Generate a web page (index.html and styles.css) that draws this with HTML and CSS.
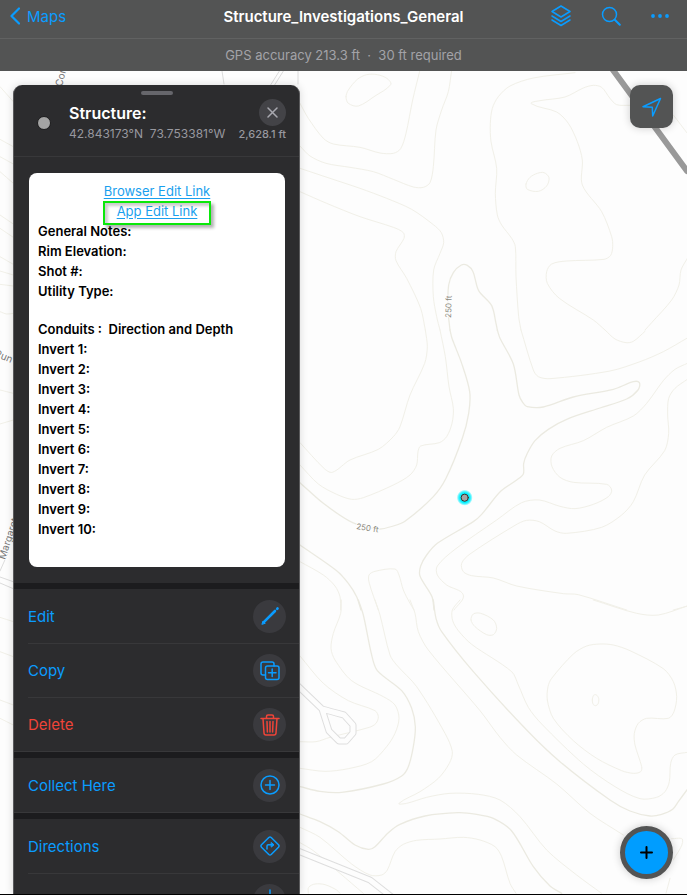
FILE: index.html
```html
<!DOCTYPE html>
<html lang="en">
<head>
<meta charset="utf-8">
<meta name="viewport" content="width=device-width, initial-scale=1">
<title>Structure_Investigations_General</title>
<link rel="stylesheet" href="styles.css">
</head>
<body>
<div class="app">
  <header class="topbar">
    <div class="nav">
      <a class="back" href="#">
        <svg width="10" height="18" viewBox="0 0 10 18"><path d="M9 1.500 1.500 9 9 16.500"/></svg>
        Maps
      </a>
      <h1 class="title">Structure_Investigations_General</h1>
      <div class="tools">
        <button class="tool" type="button" aria-label="Layers">
          <svg width="20" height="22" viewBox="1 0 20 22"><path d="M11 1 20 6.500 11 12 2 6.500ZM2 11 11 16.500 20 11M2 15 11 20.500 20 15"/></svg>
        </button>
        <button class="tool" type="button" aria-label="Search">
          <svg width="20" height="20" viewBox="0 0 20 20"><circle cx="8.500" cy="8.500" r="7"/><path class="handle" d="m13.800 13.800 5 5"/></svg>
        </button>
        <button class="tool" type="button" aria-label="More">
          <svg class="solid" width="18" height="4" viewBox="0 0 18 4"><circle cx="2" cy="2" r="1.900"/><circle cx="9" cy="2" r="1.900"/><circle cx="16" cy="2" r="1.900"/></svg>
        </button>
      </div>
    </div>
    <p class="gps">GPS accuracy 213.3 ft &nbsp;·&nbsp; 30 ft required</p>
  </header>

  <main class="stage">
    <svg class="map" viewBox="0 71 687 824" preserveAspectRatio="xMinYMin slice" aria-hidden="true">
      <defs>
        <radialGradient id="halo"><stop offset="0.600" stop-color="#00f0ff"/><stop offset="0.750" stop-color="#22f2ff" stop-opacity="0.850"/><stop offset="1" stop-color="#00f0ff" stop-opacity="0"/></radialGradient>
      </defs>
      <g id="contours"></g>
      <path class="highway" d="M613 70 687 171"/>
      <g class="road">
        <path class="casing" d="M298 686 322 709Q329 711 344 715L353 725V733L346 741H339L329 731 322 709M298 851 370 880 398 902"/>
        <path class="fill" d="M298 686 322 709Q329 711 344 715L353 725V733L346 741H339L329 731 322 709M298 851 370 880 398 902"/>
      </g>
      <path class="lane" d="M270 86 280 70M274 86 284 70M222 71 224 84M298 71 298 84M0 577 14 582M0 583 14 589M0 571 8 553"/>
      <g class="labels">
        <text transform="translate(451 318)rotate(-88)">250 ft</text>
        <text transform="translate(356 529)rotate(9)">250 ft</text>
        <text class="street" transform="translate(62 87)rotate(-76)">Corp</text>
        <text class="street" transform="translate(-6 356)rotate(22)">Run</text>
        <text class="street" transform="translate(5 560)rotate(-72)">Margaret</text>
      </g>
      <circle cx="464.700" cy="497.700" r="8" fill="url(#halo)" stroke="none"/>
      <circle class="point" cx="464.700" cy="497.700" r="3.600"/>
    </svg>

    <section class="panel">
      <div class="grabber"></div>
      <div class="summary">
        <span class="marker"></span>
        <h2 class="name">Structure:</h2>
        <button class="close" type="button" aria-label="Close">
          <svg width="11" height="11" viewBox="0 0 11 11"><path d="m1 1 9 9M10 1 1 10"/></svg>
        </button>
        <p class="position"><span>42.843173°N&nbsp; 73.753381°W</span><span class="distance">2,628.1 ft</span></p>
      </div>

      <div class="details">
        <div class="card">
          <div class="links">
            <a href="#">Browser Edit Link</a>
            <a class="marked" href="#">App Edit Link</a>
          </div>
          <ul class="fields">
            <li>General Notes:</li>
            <li>Rim Elevation:</li>
            <li>Shot #:</li>
            <li>Utility Type:</li>
          </ul>
          <ul class="fields">
            <li>Conduits :&nbsp; Direction and Depth</li>
            <li>Invert 1:</li>
            <li>Invert 2:</li>
            <li>Invert 3:</li>
            <li>Invert 4:</li>
            <li>Invert 5:</li>
            <li>Invert 6:</li>
            <li>Invert 7:</li>
            <li>Invert 8:</li>
            <li>Invert 9:</li>
            <li>Invert 10:</li>
          </ul>
        </div>
      </div>

      <div class="group">
        <button class="action" type="button">Edit
          <span class="badge"><svg width="20" height="20" viewBox="0 0 20 20"><path class="pencil" d="M3.800 16.200 15 5M17.200 2.800l.3-.3"/><path class="tip" d="m2 18 1-3 2 2Z"/></svg></span>
        </button>
        <button class="action" type="button">Copy
          <span class="badge"><svg width="20" height="20" viewBox="0 0 20 20"><path d="M5.500 14H3Q1 14 1 12V3Q1 1 3 1H12Q14 1 14 3V5"/><rect x="5.500" y="5" width="13.500" height="13.500" rx="2"/><path d="M12.200 8V15.500M8.500 11.800H16"/></svg></span>
        </button>
        <button class="action danger" type="button">Delete
          <span class="badge"><svg width="20" height="22" viewBox="0 0 20 22"><path d="M1 4.500H19M6.500 4.500V2.500Q6.500 1 8 1H12Q13.500 1 13.500 2.500V4.500M3 4.500 4 19Q4.100 21 6 21H14Q15.900 21 16 19L17 4.500M7 7.500 7.400 18M10 7.500V18M13 7.500 12.600 18"/></svg></span>
        </button>
      </div>
      <div class="group">
        <button class="action" type="button">Collect Here
          <span class="badge"><svg width="20" height="20" viewBox="0 0 20 20"><circle cx="10" cy="10" r="9"/><path d="M10 5.500V14.500M5.500 10H14.500"/></svg></span>
        </button>
      </div>
      <div class="group">
        <button class="action" type="button">Directions
          <span class="badge"><svg width="20" height="20" viewBox="0 0 20 20"><path d="M8.800 1.500Q10 .4 11.200 1.500L18.500 8.800Q19.600 10 18.500 11.200L11.200 18.500Q10 19.600 8.800 18.500L1.500 11.200Q.4 10 1.500 8.800Z"/><path d="M7 13V10Q7 8.800 8.200 8.800H13"/><path class="tip" d="M11.500 6.700 14 8.800 11.500 10.900Z"/></svg></span>
        </button>
        <button class="action" type="button" aria-label="Compass">
          <span class="badge"><svg width="22" height="24" viewBox="0 0 22 24"><circle cx="11" cy="13" r="7"/><path d="M11 1V9M11 17V23M1 13H7M15 13H21"/></svg></span>
        </button>
      </div>
    </section>

    <div class="controls">
      <button class="locate" type="button" aria-label="My location">
        <svg width="20" height="20" viewBox="0 0 20 20"><path d="M18.500 1.500 1 9.700 10.300 10.200 10.700 19Z"/></svg>
      </button>
      <button class="add" type="button" aria-label="Add">
        <svg width="13" height="13" viewBox="0 0 13 13"><path d="M6.500 1V12M1 6.500H12"/></svg>
      </button>
    </div>
  </main>
</div>
<script src="contours.js"></script>
</body>
</html>
```
FILE: contours.js
```js
// Elevation contours by map tile. Tile coordinates are three units per pixel.
// A line that starts with "!" is an index contour, "o" closes the loop.
const tiles = [
  { x: 300, y: 70, lines: [
    "o 138,80 145,60 172,28 200,14 232,14 262,26 272,44 225,78 175,108 145,100",
    "0,100 25,145 70,205 100,222 180,232 240,249 280,250 302,236 318,190 338,90 360,0",
    "0,228 30,258 78,280 150,292 220,305 280,328 340,351 370,352 390,338 400,290 408,180 425,120 445,65 455,0",
    "0,295 90,325 180,355 260,385 335,418 400,464 424,488 431,518 420,550 401,600 400,680 410,740 420,780",
    "0,365 80,400 180,440 280,472 310,488 312,505 288,545 288,572 320,625 362,715 376,780",
    "825,8 700,24 630,48 595,80 577,115 571,160 573,215 590,295 586,370 592,435 605,465 635,505 646,530 648,620 656,740 663,780",
    "990,106 950,104 930,85 905,52 880,46 850,54 795,81 720,92 694,101 770,126 805,160 832,215 847,270 847,345 905,425 935,500 938,530 932,556 912,568 800,573 755,582 740,605 742,640 778,685 880,750 915,780",
    "o 678,342 690,322 712,310 732,308 747,323 740,348 715,364 682,358",
    "1120,135 1162,190",
    "1162,565 1143,600 1137,645 1115,690 1055,758 1035,780",
    "! 450,780 444,720 446,645 460,608 484,585 502,586 519,605 536,662 575,707 588,760 592,780"
  ]},
  { x: 300, y: 330, lines: [
    "376,0 382,50 374,100 330,195 300,290 280,320 235,358 150,390 97,427 72,415 0,338",
    "420,0 436,80 447,170 460,235 456,280 440,320 418,338 362,348 354,365 350,405 330,435 280,465 190,503 155,508 110,493 55,462 0,405",
    "! 450,0 456,25 485,100 509,185 506,250 487,325 438,445 400,500 316,573 280,588 235,597 158,578 70,520 0,458",
    "! 592,0 600,25 640,102 657,195 668,217 682,230 730,231 820,201 940,178 1000,155 1018,158 1014,180 980,207 900,234 805,266 745,298 705,332 682,370 671,400 670,432 650,450 602,484 545,553 520,575 412,640 380,675 362,708 360,738 396,800 402,840",
    "663,0 700,120 715,140 750,146 930,123 1020,95 1090,65 1162,24",
    "915,0 945,27 978,38 1000,34 1035,4",
    "1162,100 1125,118 1090,152 1040,220 1000,258 920,292 850,332 780,355 755,378 756,410 780,442 820,457 920,463 935,480 925,500 880,523 825,536 780,529 718,510 665,518 590,570 465,658 412,708 412,735 440,765 490,795 462,840",
    "1162,148 1125,175 1106,205 1103,255 1106,310 1094,362 1034,435 1000,515 965,555 905,592 800,610 765,603 718,575 680,571 645,586 510,672 485,700 490,725 515,737 580,744 650,768 790,791 835,794 980,840",
    "! 0,645 110,722 145,760 170,800 183,840",
    "0,695 70,735 105,768 120,800 122,840",
    "235,840 208,760 207,735 225,724 285,717 297,735 310,780 330,820 342,840",
    "1120,840 1162,828"
  ]},
  { x: 300, y: 600, lines: [
    "124,0 122,40 100,100 93,145 105,180 155,242 250,290 285,315 297,355 285,400 260,440 215,485 145,506 75,514 0,505",
    "! 175,0 190,45 215,165 232,212 305,272 335,325 346,380 340,440 325,500 305,528 250,552 125,577 60,574 0,560",
    "225,0 240,45 270,165 290,195 350,260 435,400 457,455 448,490 415,535 360,575 297,610 320,610 380,592 450,580 535,583 600,600 660,650 740,750 830,825 905,880",
    "330,0 345,40 355,95 385,150 540,332 600,412 650,465 770,552 870,640 970,705",
    "! 400,0 408,55 425,95 520,215 680,390 780,485 930,600 990,633 1050,648 1085,643 1118,628 1135,605 1162,568",
    "480,0 457,30 458,62 475,92 515,133 635,215 655,255 685,322 725,372 850,492 945,560 1020,596 1070,592 1095,575 1108,545 1112,490 1125,465 1162,457",
    "o 513,60 520,42 542,40 580,60 590,85 580,104 560,104 525,80",
    "880,0 1010,40 1075,45 1162,18",
    "o 742,300 744,260 755,235 820,162 860,138 900,132 940,135 990,152 1090,206 1120,245 1130,290 1122,335 1105,355 1040,355 1015,370 1003,400 1005,435 1025,500 1022,515 1000,520 965,512 890,475 820,422 760,355",
    "o 877,300 880,287 888,284 896,295 894,312 886,317 879,312",
    "0,168 70,250 145,302 225,332 235,350 228,370 208,382 90,412 48,425 0,425",
    "! 0,642 60,665 115,695 165,735 205,748 225,740 265,698 300,673 375,648 475,638 530,643 580,655 635,693 700,800 750,858 785,880",
    "0,682 60,712 155,792 210,825 245,825 262,810 285,755 310,733 350,721 420,717 490,712 540,720 585,740 605,770 630,850 648,880",
    "0,728 40,752 120,820 190,880",
    "25,880 26,862 45,852 75,854 110,870 120,880",
    "1115,716 1148,720 1120,780",
    "1110,835 1098,880"
  ]},
  { x: 0, y: 60, lines: [
    "0,80 40,125", "0,238 40,260", "0,290 40,312", "0,335 40,370", "0,465 40,492",
    "0,505 40,532", "0,590 40,613", "0,633 40,645", "0,673 40,678", "0,755 20,762 40,760",
    "0,990 40,1000", "0,1092 40,1080", "0,1672 40,1685", "0,1775 40,1790", "0,1920 40,1935", "0,1975 40,1995"
  ]}
];

function curve(points, closed) {
  const n = points.length;
  const at = i => closed ? points[(i + n) % n] : points[Math.max(0, Math.min(n - 1, i))];
  let d = `M${points[0]}`;
  for (let i = 0; i < (closed ? n : n - 1); i++) {
    const [a, b, c, e] = [at(i - 1), at(i), at(i + 1), at(i + 2)];
    const span = Math.hypot(c[0] - b[0], c[1] - b[1]);
    // Handles follow the neighbours' direction but stay within the segment.
    const handle = (from, to) => {
      const len = Math.hypot(to[0] - from[0], to[1] - from[1]) || 1;
      return [(to[0] - from[0]) / len * span * 0.3, (to[1] - from[1]) / len * span * 0.3];
    };
    const h1 = handle(a, c);
    const h2 = handle(b, e);
    d += `C${b[0] + h1[0]},${b[1] + h1[1]} ${c[0] - h2[0]},${c[1] - h2[1]} ${c}`;
  }
  return d;
}

const layer = document.getElementById("contours");
for (const tile of tiles) {
  for (const line of tile.lines) {
    const points = line.match(/-?\d+,-?\d+/g).map(pair => {
      const [x, y] = pair.split(",").map(Number);
      return [tile.x + x / 3, tile.y + y / 3];
    });
    const path = document.createElementNS("http://www.w3.org/2000/svg", "path");
    path.setAttribute("d", curve(points, line[0] === "o"));
    if (line[0] === "!") path.setAttribute("class", "index");
    layer.append(path);
  }
}
```
FILE: styles.css
```css
* { box-sizing: border-box; }

body {
  margin: 0;
  font-family: Inter, "Liberation Sans", sans-serif;
  color: #fff;
  background: #000;
}

h1, h2, p, ul { margin: 0; padding: 0; font-weight: inherit; }
button { border: 0; padding: 0; background: none; font: inherit; color: inherit; }

svg {
  display: block;
  fill: none;
  stroke: currentColor;
  stroke-width: 1.5;
  stroke-linecap: round;
  stroke-linejoin: round;
}

.app {
  height: 100vh;
  display: flex;
  flex-direction: column;
  border-bottom: 1px solid #000;
}

.topbar { background: #535454; text-align: center; }

.nav {
  display: grid;
  grid-template-columns: 1fr auto 1fr;
  align-items: center;
  height: 39px;
  padding: 0 10px 6px;
  border-bottom: 1px solid #616262;
}

.back {
  display: flex;
  align-items: center;
  gap: 7px;
  font-size: 15px;
  color: #0a9cff;
  text-decoration: none;
}
.back svg { stroke-width: 2.2; }

.title { font-size: 15px; font-weight: 600; }

.tools {
  display: flex;
  align-items: center;
  justify-content: flex-end;
  gap: 30px;
  padding-right: 8px;
  color: #0a9cff;
}
.handle { stroke-width: 2; }
.solid { fill: currentColor; stroke: none; }

.gps {
  font-size: 13px;
  line-height: 32px;
  color: #a3a3a8;
}

.stage {
  flex: 1;
  min-height: 0;
  position: relative;
  display: flex;
  justify-content: space-between;
  overflow: hidden;
  background: #fdfdfd;
}

.map {
  position: absolute;
  inset: 0;
  width: 100%;
  height: 100%;
}
#contours { stroke: #f1f0e8; stroke-width: 1; }
#contours .index { stroke: #ebeae1; stroke-width: 1.3; }
.highway { stroke: #999; stroke-width: 6; }
.casing { stroke: #dedede; stroke-width: 7; }
.fill { stroke: #fdfdfd; stroke-width: 5; }
.lane { stroke: #dcdcdc; stroke-width: 1; }
.labels text {
  font-size: 8px;
  fill: #8c8a80;
  stroke: #fdfdfd;
  stroke-width: 2;
  paint-order: stroke;
}
.labels .street { font-size: 10px; fill: #777; }
.point { fill: #a4a4a4; stroke: #333; stroke-width: 1; }

.panel {
  position: relative;
  flex: 0 1 287px;
  margin: 14px 0 0 13px;
  overflow: hidden;
  border: 1px solid #5a5a5c;
  border-width: 0 1px;
  border-radius: 9px 9px 0 0;
  background: #2c2c2e;
  box-shadow: 0 0 8px rgba(0, 0, 0, 0.15);
}

.grabber {
  width: 32px;
  height: 4px;
  margin: 6px auto 4px;
  border-radius: 2px;
  background: #66666b;
}

.summary {
  display: grid;
  grid-template-columns: 32px 1fr auto;
  grid-template-rows: 27px 16px;
  align-items: center;
  padding: 0 13px 14px 23px;
  border-bottom: 1px solid #38383a;
}

.marker {
  grid-row: 1 / 3;
  width: 14px;
  height: 14px;
  margin-top: 4px;
  border: 1px solid #1b1b1c;
  border-radius: 50%;
  background: #a4a4a4;
}

.name { font-size: 16px; font-weight: 600; }

.close {
  display: grid;
  place-items: center;
  width: 27px;
  height: 27px;
  border-radius: 50%;
  background: #434347;
  color: #a9a9b0;
}

.position {
  grid-column: 2 / 4;
  display: flex;
  align-items: baseline;
  justify-content: space-between;
  font-size: 12px;
  line-height: 16px;
  white-space: nowrap;
  color: #98989f;
}
.distance { font-size: 11px; font-weight: 500; }

.details { padding: 16px 14px 16px 15px; }

.card {
  display: grid;
  gap: 18px;
  padding: 8px 9px 28px;
  border-radius: 8px;
  background: #fff;
  color: #000;
  font-size: 13px;
  line-height: 20px;
}

.links {
  display: grid;
  justify-items: center;
  margin-bottom: -18px;
}
.links a { color: #1a9fee; text-underline-offset: 2px; }

.marked { position: relative; }
.marked::after {
  content: "";
  position: absolute;
  inset: 0 -14px -4px;
  border: 2px solid #0ae80a;
  box-shadow: 3px 3px 3px rgba(0, 0, 0, 0.3), inset 3px 3px 3px rgba(0, 0, 0, 0.2);
}

.fields { list-style: none; font-weight: 600; }

.group {
  border-top: 6px solid #1c1c1e;
  border-bottom: 1px solid #38383a;
}

.action {
  display: flex;
  align-items: center;
  justify-content: space-between;
  width: calc(100% - 14px);
  height: 54px;
  margin-left: 14px;
  padding-right: 13px;
  font-size: 15px;
  color: #0a9cff;
}
.action + .action { border-top: 1px solid #38383a; }
.danger { color: #f04438; }

.badge {
  display: grid;
  place-items: center;
  width: 33px;
  height: 33px;
  margin-left: auto;
  border-radius: 50%;
  background: #3a3a3e;
}
.pencil { stroke-width: 2.6; }
.tip { fill: currentColor; stroke-width: 1; }

.controls {
  position: relative;
  display: flex;
  flex-direction: column;
  align-items: flex-end;
  justify-content: space-between;
  margin: 14px 14px 15px 0;
}

.locate, .add {
  display: grid;
  place-items: center;
  background: #535454;
  box-shadow: 0 0 8px rgba(0, 0, 0, 0.2);
}
.locate {
  width: 43px;
  height: 43px;
  border-radius: 10px;
  color: #0a9cff;
}
.add {
  width: 53px;
  height: 53px;
  border: 5px solid #535454;
  border-radius: 50%;
  background: #009dff;
  color: #000;
}
.add svg { stroke-width: 2; }
```
